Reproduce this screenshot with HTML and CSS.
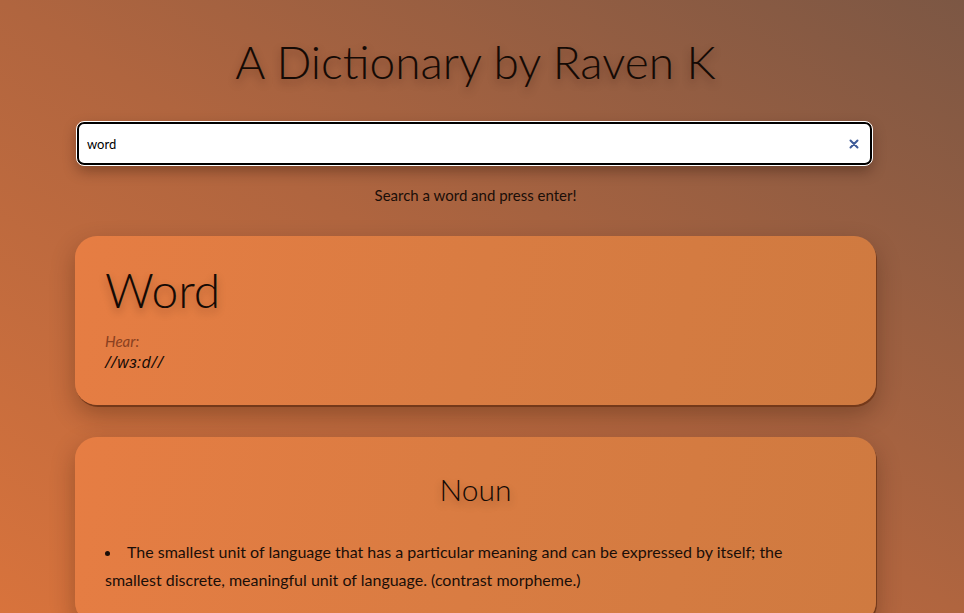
FILE: index.html
```html
<!DOCTYPE html>
<html lang="en">
<head>
<meta charset="utf-8">
<title>A Dictionary by Raven K</title>
<link rel="stylesheet" href="styles.css">
</head>
<body>
<div class="app">
  <h1 class="title">A Dictionary by Raven K</h1>
  <form class="search">
    <input class="search-input" type="search" value="word">
    <span class="clear" aria-hidden="true">
      <svg width="10" height="10" viewBox="0 0 10 10"><path d="M1.5 1.5 L8.5 8.5 M8.5 1.5 L1.5 8.5" stroke="#3d5a98" stroke-width="2" stroke-linecap="round"/></svg>
    </span>
  </form>
  <p class="hint">Search a word and press enter!</p>

  <section class="card card-word">
    <h2 class="word">Word</h2>
    <div class="hear">Hear:</div>
    <div class="phonetic">//wɜ:d//</div>
  </section>

  <section class="card card-meaning">
    <h3 class="pos">Noun</h3>
    <ul class="defs">
      <li>The smallest unit of language that has a particular meaning and can be expressed by itself; the smallest discrete, meaningful unit of language. (contrast morpheme.)</li>
    </ul>
  </section>
</div>
</body>
</html>
```

FILE: styles.css
```css
html, body {
  margin: 0;
  padding: 0;
  height: 100%;
}
body {
  background: linear-gradient(to top right, #d8733c 0%, #b0653f 50%, #7c5744 100%);
  font-family: Lato, "Open Sans", sans-serif;
  color: #1a0e08;
  overflow: hidden;
}
.app {
  padding: 0 88px 0 75px;
  display: flex;
  flex-direction: column;
}
.title {
  margin: 34px 0 0;
  text-align: center;
  font-weight: 300;
  font-size: 46px;
  line-height: 56px;
  color: #140a05;
  text-shadow: 0 4px 8px rgba(40, 15, 0, 0.35);
}
.search {
  margin: 32px 4px 0 2px;
  position: relative;
  display: flex;
}
.search-input {
  flex: 1;
  height: 43px;
  box-sizing: border-box;
  border: 2px solid #000;
  border-radius: 7px;
  outline: 1px solid #fff;
  outline-offset: 0;
  background: #fff;
  padding: 0 30px 0 8px;
  font-family: Lato, sans-serif;
  font-size: 13px;
  color: #000;
  box-shadow: 0 6px 14px rgba(30, 10, 0, 0.35);
}
.search-input::-webkit-search-cancel-button { display: none; }
.clear {
  position: absolute;
  right: 13px;
  top: 17px;
  line-height: 0;
}
.hint {
  margin: 21px 0 0;
  text-align: center;
  font-size: 15px;
  color: #1a0e08;
}
.card {
  border-radius: 22px;
  background: linear-gradient(100deg, #e67d43 0%, #d97c42 50%, #cf7a40 100%);
  box-shadow: 1px 2px 0 #74391a, 0 10px 24px rgba(40, 15, 0, 0.3);
  padding: 0 30px;
}
.card-word {
  margin-top: 32px;
  height: 169px;
  box-sizing: border-box;
  padding-top: 23px;
}
.word {
  margin: 0;
  font-weight: 300;
  font-size: 48px;
  line-height: 62px;
  color: #140a05;
  text-shadow: 0 4px 8px rgba(40, 15, 0, 0.3);
}
.hear {
  margin-top: 11px;
  font-style: italic;
  font-size: 15px;
  line-height: 18px;
  color: #8a4020;
}
.phonetic {
  font-family: "Open Sans", sans-serif;
  font-style: italic;
  font-size: 16px;
  line-height: 24px;
  letter-spacing: 0.5px;
  color: #140a05;
}
.card-meaning {
  margin-top: 32px;
  padding-top: 30px;
  padding-bottom: 30px;
}
.pos {
  margin: 0;
  text-align: center;
  font-weight: 300;
  font-size: 30px;
  line-height: 44px;
  color: #140a05;
  text-shadow: 0 4px 8px rgba(40, 15, 0, 0.3);
}
.defs {
  margin: 27px 0 0;
  padding: 0 30px 0 0;
  list-style-position: inside;
  font-size: 16px;
  line-height: 28px;
}
```
